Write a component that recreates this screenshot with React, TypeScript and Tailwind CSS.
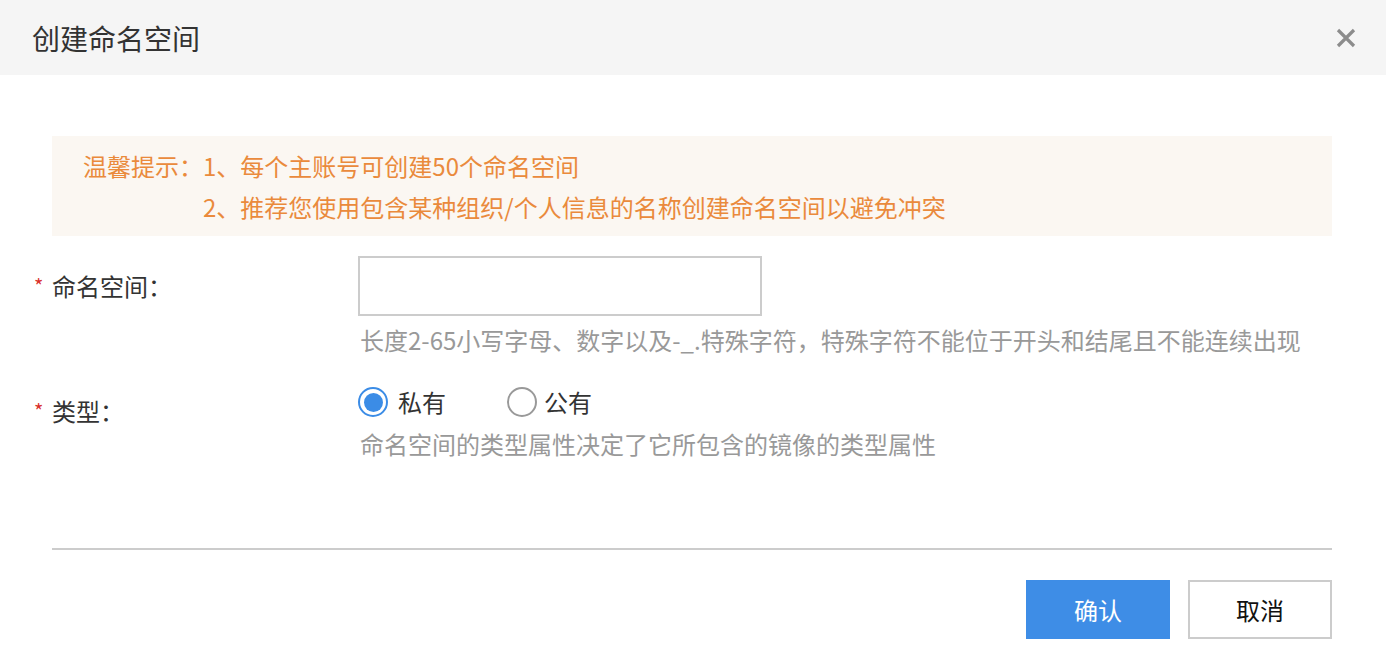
import React from "react";

const font = { fontFamily: '"Noto Sans CJK SC", "Noto Sans", sans-serif' };

export default function App() {
  return (
    <div className="w-[1386px] h-[664px] bg-white overflow-hidden" style={font}>
      <div className="h-[75px] bg-[#f5f5f5] flex items-center justify-between pl-[32px] pr-[30px]">
        <div className="text-[28px] text-[#333] leading-none">创建命名空间</div>
        <svg width="20" height="20" viewBox="0 0 20 20">
          <path d="M2 2 L18 18 M18 2 L2 18" stroke="#8c8c8c" strokeWidth="3.2" strokeLinecap="butt" />
        </svg>
      </div>
      <div className="pl-[52px] pr-[54px] pt-[61px]">
        <div className="h-[100px] bg-[#fbf7f2] py-[9px] pl-[31px] text-[24px] leading-[41px] text-[#ea8a3c]">
          <div className="flex">
            <span>温馨提示：</span>
            <span>1、每个主账号可创建50个命名空间</span>
          </div>
          <div className="pl-[120px]">2、推荐您使用包含某种组织/个人信息的名称创建命名空间以避免冲突</div>
        </div>

        <div className="flex mt-[20px]">
          <div className="w-[306px] text-[24px] leading-[60px] text-[#333] flex">
            <span className="-ml-[18px] w-[18px] text-[#d9302b] text-[20px]">*</span>
            <span>命名空间：</span>
          </div>
          <div className="flex flex-col">
            <input className="w-[404px] h-[60px] border-2 border-[#cccccc] outline-none px-3 text-[22px]" />
            <div className="mt-[6px] text-[24px] leading-[36px] text-[#999] pl-[2px] whitespace-nowrap">
              长度2-65小写字母、数字以及-_.特殊字符，特殊字符不能位于开头和结尾且不能连续出现
            </div>
          </div>
        </div>

        <div className="flex mt-[26px]">
          <div className="w-[306px] text-[24px] leading-[36px] text-[#333] flex pt-[9px]">
            <span className="-ml-[18px] w-[18px] text-[#d9302b] text-[20px]">*</span>
            <span>类型：</span>
          </div>
          <div className="flex flex-col">
            <div className="flex items-center h-[36px] text-[24px] text-[#333]">
              <span className="w-[30px] h-[30px] rounded-full border-2 border-[#3b8ce6] flex items-center justify-center">
                <span className="w-[19px] h-[19px] rounded-full bg-[#3b8ce6]" />
              </span>
              <span className="ml-[10px]">私有</span>
              <span className="ml-[61px] w-[30px] h-[30px] rounded-full border-2 border-[#999]" />
              <span className="ml-[7px]">公有</span>
            </div>
            <div className="mt-[6px] text-[24px] leading-[36px] text-[#999] pl-[2px]">
              命名空间的类型属性决定了它所包含的镜像的类型属性
            </div>
          </div>
        </div>

        <div className="mt-[86px] h-[2px] bg-[#cccccc]" />

        <div className="flex justify-end gap-[18px] mt-[30px]">
          <button className="w-[144px] h-[59px] bg-[#3e8de6] text-white text-[24px]">确认</button>
          <button className="w-[144px] h-[59px] border-2 border-[#cccccc] bg-white text-[#111] text-[24px]">取消</button>
        </div>
      </div>
    </div>
  );
}
